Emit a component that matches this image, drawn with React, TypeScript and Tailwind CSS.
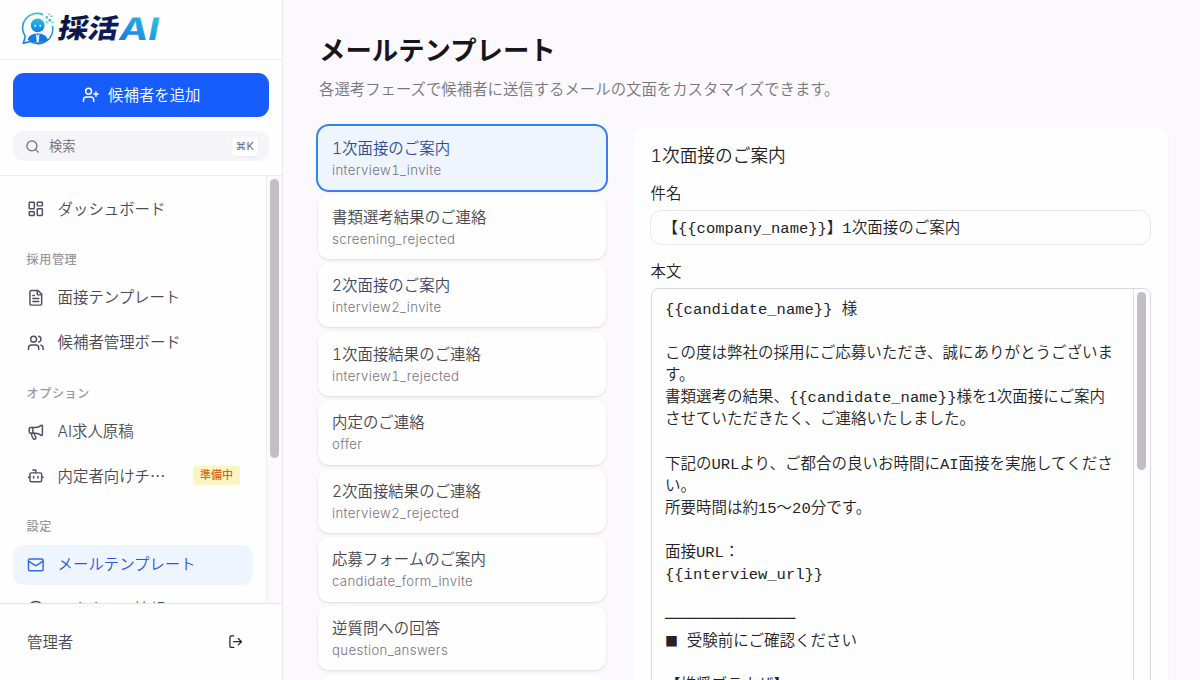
import React from "react";
import { UserPlus, Search, LayoutDashboard, FileText, Users, Megaphone, Bot, Mail, CircleUser, LogOut, type LucideIcon } from "lucide-react";

const templates = [
  ["1次面接のご案内", "interview1_invite"],
  ["書類選考結果のご連絡", "screening_rejected"],
  ["2次面接のご案内", "interview2_invite"],
  ["1次面接結果のご連絡", "interview1_rejected"],
  ["内定のご連絡", "offer"],
  ["2次面接結果のご連絡", "interview2_rejected"],
  ["応募フォームのご案内", "candidate_form_invite"],
  ["逆質問への回答", "question_answers"],
];

const body = [
  "{{candidate_name}} 様",
  "",
  "この度は弊社の採用にご応募いただき、誠にありがとうございま",
  "す。",
  "書類選考の結果、{{candidate_name}}様を1次面接にご案内",
  "させていただきたく、ご連絡いたしました。",
  "",
  "下記のURLより、ご都合の良いお時間にAI面接を実施してくださ",
  "い。",
  "所要時間は約15〜20分です。",
  "",
  "面接URL：",
  "{{interview_url}}",
  "",
  "──────────────",
  "■ 受験前にご確認ください",
  "",
  "【推奨ブラウザ】",
];

function Logo() {
  return (
    <svg width="150" height="44" viewBox="0 0 150 44" className="block overflow-visible">
      <defs>
        <linearGradient id="mark" x1="0" y1="0" x2="0" y2="1">
          <stop offset="0" stopColor="#22c3dc" />
          <stop offset="1" stopColor="#1479e8" />
        </linearGradient>
        <linearGradient id="kanji" x1="0" y1="0" x2="1" y2="1">
          <stop offset="0" stopColor="#0b1030" />
          <stop offset="1" stopColor="#10206c" />
        </linearGradient>
        <linearGradient id="latin" x1="0" y1="1" x2="0.6" y2="0">
          <stop offset="0" stopColor="#1668ee" />
          <stop offset="1" stopColor="#27c4dc" />
        </linearGradient>
      </defs>
      <path d="M21 3.6A14.6 14.6 0 0 0 3.3 25.5L1.4 32.2L8.5 30.4A14.6 14.6 0 0 0 30.5 15" fill="none" stroke="url(#mark)" strokeWidth="1.6" />
      <circle cx="15.7" cy="14.4" r="6.9" fill="url(#mark)" />
      <circle cx="13.2" cy="14.8" r="1" fill="#fff" />
      <circle cx="18.3" cy="14.8" r="1" fill="#fff" />
      <path d="M5.5 28.4C7.5 23.7 11 22.4 15.7 22.4S23.5 23.7 26 28.4C22 32.8 9.5 32.8 5.5 28.4Z" fill="#1679df" />
      <path d="M14 22.8L15.7 24.4L17.4 22.8L16.8 31H14.6Z" fill="#d9f3fb" />
      <g fill="#35c8dd">
        <rect x="23.5" y="5.2" width="2.4" height="2.4" />
        <rect x="26.4" y="8" width="2.6" height="2.6" />
        <rect x="28.7" y="4.4" width="1.6" height="1.6" />
        <rect x="23.8" y="10.4" width="1.8" height="1.8" />
        <rect x="29.6" y="10.6" width="1.5" height="1.5" />
        <rect x="26.4" y="2.6" width="1.5" height="1.5" />
      </g>
      <g transform="skewX(-11)" fontWeight="900">
        <text x="40" y="26.5" fontSize="27" textLength="60" lengthAdjust="spacingAndGlyphs" fontFamily="Noto Sans CJK JP" fill="url(#kanji)">採活</text>
        <text x="101" y="28.5" fontSize="31" textLength="40" lengthAdjust="spacingAndGlyphs" fontFamily="Inter" fontWeight="700" fill="url(#latin)">AI</text>
      </g>
    </svg>
  );
}

function NavItem({ icon: Icon, label, active, badge }: { icon: LucideIcon; label: string; active?: boolean; badge?: string }) {
  return (
    <div className={`flex h-10 shrink-0 items-center rounded-[11px] pl-[13.5px] pr-[13px] ${active ? "bg-[#eff5ff] text-[#2c56dc]" : "text-[#4b4953]"}`}>
      <Icon size={17.6} strokeWidth={2} className={`shrink-0 ${active ? "text-[#2f6bea]" : "text-[#504f62]"}`} />
      <span className={`ml-[13.5px] whitespace-nowrap ${badge ? "pb-px font-['Noto_Sans_CJK_JP',sans-serif]" : "pt-px"}`}>{label}</span>
      {badge && <span className="ml-auto rounded-[3px] bg-[#fef3c2] px-[7px] py-[1px] text-[11px] leading-[17px] font-medium text-[#c96a1c]">{badge}</span>}
    </div>
  );
}

function Section({ children }: { children: string }) {
  return <div className="flex h-[40.2px] shrink-0 items-center pl-[13.5px] pt-[14px] text-[12.1px] font-medium tracking-[0.6px] text-[#99959f]">{children}</div>;
}

export default function App() {
  return (
    <div className="flex h-[680px] w-[1200px] overflow-hidden bg-[#fbf9fd] font-['Inter','Noto_Sans_CJK_JP',sans-serif] text-[15.4px] leading-[22px] font-[350] tabular-nums">
      <aside className="flex w-[283px] shrink-0 flex-col border-r border-[#e9e6ed] bg-[#fefefe]">
        <div className="h-[60px] shrink-0 border-b border-[#ebe9ee] pl-[22px] pt-[11px]">
          <Logo />
        </div>
        <div className="h-[116px] shrink-0 border-b border-[#ebe9ee] px-[13px] pt-[13px]">
          <button className="flex h-[44px] w-full items-center justify-center gap-[9px] rounded-[11px] bg-[#175cfd] text-white">
            <UserPlus size={17.6} />
            <span className="pt-[2px]">候補者を追加</span>
          </button>
          <div className="mt-[14px] flex h-[30px] items-center rounded-[11px] bg-[#f5f4f8] pl-[11.5px] pr-[11px] text-[13.2px] text-[#6c6a73]">
            <Search size={15} className="text-[#6b6974]" />
            <span className="ml-[9.5px] flex-1">検索</span>
            <kbd className="rounded-[4px] bg-white px-[4px] font-['Inter','Noto_Sans_CJK_JP','DejaVu_Sans',sans-serif] text-[11px] leading-[19px] font-normal text-[#6b6974] shadow-xs">⌘K</kbd>
          </div>
        </div>
        <div className="flex min-h-0 flex-1 overflow-hidden">
          <nav className="flex flex-1 flex-col gap-[4.4px] overflow-hidden px-[13px] pt-[13px]">
            <NavItem icon={LayoutDashboard} label="ダッシュボード" />
            <Section>採用管理</Section>
            <NavItem icon={FileText} label="面接テンプレート" />
            <NavItem icon={Users} label="候補者管理ボード" />
            <Section>オプション</Section>
            <NavItem icon={Megaphone} label="AI求人原稿" />
            <NavItem icon={Bot} label="内定者向けチ…" badge="準備中" />
            <Section>設定</Section>
            <NavItem icon={Mail} label="メールテンプレート" active />
            <NavItem icon={CircleUser} label="アカウント情報" />
          </nav>
          <div className="w-[16px] shrink-0 border-l border-[#efedf1] bg-[#fbf9fc] pl-[3px] pt-[3px]">
            <div className="h-[279px] w-[9px] rounded-full bg-[#c2bfc3]" />
          </div>
        </div>
        <div className="flex h-[77px] shrink-0 items-center justify-between border-t border-[#e6e4ea] pl-[27px] pr-[39px] text-[#4b4953]">
          <span className="pt-[2px]">管理者</span>
          <LogOut size={15.4} className="text-[#29272f]" />
        </div>
      </aside>

      <main className="flex min-w-0 flex-1 flex-col pl-[36px] pr-[32px] pt-[33px]">
        <h1 className="text-[26.4px] leading-[35px] font-bold text-[#17161b]">メールテンプレート</h1>
        <p className="mt-[11px] text-[#78757e]">各選考フェーズで候補者に送信するメールの文面をカスタマイズできます。</p>
        <div className="mt-[25px] -ml-px flex min-h-0 flex-1 gap-[26.5px]">
          <div className="flex w-[288px] shrink-0 flex-col gap-[4.4px]">
            {templates.map(([title, id], i) => (
              <div key={id} className={`h-[64.2px] shrink-0 rounded-[11px] pl-[14px] pt-[11px] ${i === 0 ? "bg-[#eff5ff] ring-2 ring-[#3580f5]" : "bg-[#fefefe] shadow-sm"}`}>
                <div className={`leading-[23px] tracking-[0.05px] ${i === 0 ? "text-[#2c4c9c]" : i === 2 ? "text-[#3c4666]" : "text-[#47454e]"}`}>{title}</div>
                <div className="text-[13.2px] leading-[21px] tracking-[0.37px] text-[#77747e]">{id}</div>
              </div>
            ))}
            <div className="h-[64.2px] shrink-0 rounded-[11px] bg-[#fefefe] shadow-sm" />
          </div>
          <section className="mt-[2px] flex h-[620px] min-w-0 flex-1 flex-col rounded-[11px] bg-[#fefefe] pr-[17px] pl-[18px] pt-[15px] text-[#232228] shadow-xs">
            <h2 className="text-[17.7px] leading-[25px]">1次面接のご案内</h2>
            <label className="mt-[15px]">件名</label>
            <div className="mt-[5px] -ml-px flex h-[35px] shrink-0 items-center rounded-[11px] border border-[#e9e7f0] pl-[12px] pt-[3px] font-['Liberation_Mono','Noto_Sans_CJK_JP',monospace] text-[15.5px]">
              【{"{{company_name}}"}】1次面接のご案内
            </div>
            <label className="mt-[16px]">本文</label>
            <div className="mt-[5px] flex min-h-0 flex-1 overflow-hidden rounded-[8px] border border-[#d9d7de]">
              <div className="flex-1 pl-[13.5px] pt-[10px] font-['Liberation_Mono','Noto_Sans_CJK_JP',monospace] text-[15.5px]">
                {body.map((line, i) => (
                  <div key={i} className="h-[22.1px] leading-[22.1px] whitespace-pre">
                    {line.startsWith("■") ? (
                      <>
                        <span className="inline-block w-[12.5px] font-['Noto_Sans_CJK_JP'] text-[13px]">■</span>
                        {line.slice(1)}
                      </>
                    ) : (
                      line
                    )}
                  </div>
                ))}
              </div>
              <div className="w-[17px] border-l border-[#dfdde2] bg-[#fdfcfe] pl-[3px] pt-[3px]">
                <div className="h-[178px] w-[9px] rounded-full bg-[#c2bfc3]" />
              </div>
            </div>
          </section>
        </div>
      </main>
    </div>
  );
}
